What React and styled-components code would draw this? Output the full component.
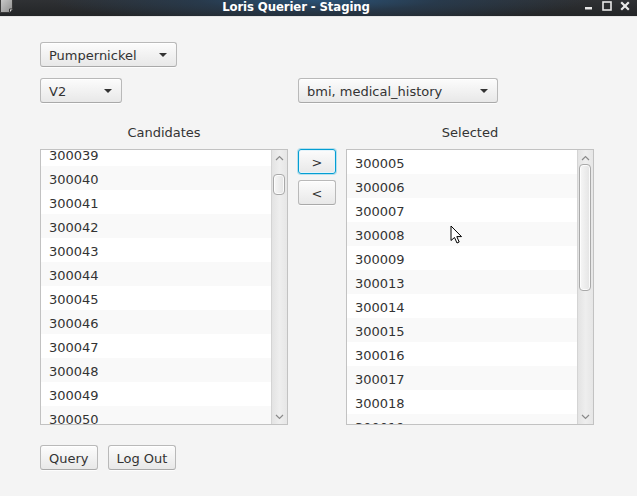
import React from 'react';
import styled, { createGlobalStyle } from 'styled-components';

const Global = createGlobalStyle`
  html, body { margin: 0; padding: 0; background: #f4f4f4; }
  body {
    font-family: "DejaVu Sans", "Liberation Sans", sans-serif;
    font-size: 13px;
    color: #333333;
  }
  #root { width: 637px; height: 496px; overflow: hidden; position: relative; }
`;

const Window = styled.div`
  width: 637px;
  height: 496px;
  display: flex;
  flex-direction: column;
  background: #f4f4f4;
  position: relative;
`;

const TitleBar = styled.div`
  height: 17px;
  flex: none;
  display: flex;
  align-items: flex-start;
  background:
    radial-gradient(ellipse 42% 150% at 50% 0%, rgba(42, 84, 122, 0.95) 0%, rgba(38, 62, 86, 0.7) 45%, rgba(40, 44, 48, 0) 100%),
    linear-gradient(#2f3134, #232527);
  border-bottom: 1px solid #e6e6e6;
  box-sizing: border-box;
`;

const AppIcon = styled.svg`
  flex: none;
  width: 14px;
  height: 14px;
`;

const Title = styled.div`
  flex: 1;
  text-align: center;
  color: #ffffff;
  font-family: "DejaVu Sans Condensed", "DejaVu Sans", sans-serif;
  font-stretch: condensed;
  font-weight: bold;
  font-size: 13px;
  line-height: 13px;
  letter-spacing: -0.1px;
  white-space: nowrap;
`;

const WinButtons = styled.div`
  flex: none;
  width: 59px;
  display: flex;
  align-items: flex-start;
  justify-content: flex-end;
  gap: 8px;
  padding-right: 7px;
  padding-top: 1px;
  box-sizing: border-box;
`;

const WinIcon = styled.svg`
  width: 10px;
  height: 10px;
  flex: none;
`;

const Content = styled.div`
  flex: 1;
  padding: 25px 0 0 40px;
  display: flex;
  flex-direction: column;
`;

const Combo = styled.div`
  box-sizing: border-box;
  width: ${p => p.$w}px;
  height: 25px;
  display: flex;
  align-items: center;
  border: 1px solid #b9b9b9;
  border-bottom-color: #a9a9a9;
  border-radius: 3px;
  background: linear-gradient(#fcfcfc, #e8e8e8);
  box-shadow: inset 0 1px 0 #ffffff, 0 1px 0 rgba(255, 255, 255, 0.8);
  margin-left: ${p => p.$ml || 0}px;
`;

const ComboText = styled.span`
  flex: 1;
  padding: 2px 0 0 8px;
  white-space: nowrap;
  overflow: hidden;
  line-height: 16px;
`;

const ComboArrow = styled.span`
  flex: none;
  width: 26px;
  display: flex;
  justify-content: center;
  align-items: center;
  &::after {
    content: "";
    display: block;
    width: 0;
    height: 0;
    border-left: 4px solid transparent;
    border-right: 4px solid transparent;
    border-top: 4px solid #333333;
  }
`;

const Row = styled.div`
  display: flex;
  align-items: center;
  margin-top: ${p => p.$mt || 0}px;
`;

const Main = styled.div`
  display: grid;
  grid-template-columns: 248px 58px 248px;
  grid-template-rows: 18px 276px;
  row-gap: 8px;
  margin-top: 20px;
`;

const ColLabel = styled.div`
  text-align: center;
  line-height: 16px;
  padding-top: 2px;
  grid-column: ${p => p.$col};
`;

const ListBox = styled.div`
  box-sizing: border-box;
  border: 1px solid #c2c2c2;
  background: #ffffff;
  display: flex;
  overflow: hidden;
  grid-column: ${p => p.$col};
`;

const ListBody = styled.div`
  flex: 1;
  overflow: hidden;
`;

const Rows = styled.div`
  margin-top: ${p => p.$offset}px;
`;

const Cell = styled.div`
  box-sizing: border-box;
  height: 24px;
  padding: 3px 0 0 8px;
  line-height: 21px;
  background: ${p => (p.$alt ? '#f9f9f9' : '#ffffff')};
  white-space: nowrap;
`;

const ScrollBar = styled.div`
  flex: none;
  width: 16px;
  display: flex;
  flex-direction: column;
  box-sizing: border-box;
  border-left: 1px solid #d4d4d4;
  background: linear-gradient(to right, #e3e3e3, #eeeeee 50%, #e6e6e6);
`;

const ScrollArrow = styled.div`
  flex: none;
  height: 15px;
  display: flex;
  align-items: center;
  justify-content: center;
`;

const Track = styled.div`
  flex: 1;
  padding: 0 2px 0 1px;
`;

const Thumb = styled.div`
  box-sizing: border-box;
  border: 1px solid #a9a9a9;
  border-radius: 4px;
  background: linear-gradient(to right, #f6f6f6, #e4e4e4);
  box-shadow: inset 0 0 0 1px rgba(255, 255, 255, 0.8);
`;

const MoveButtons = styled.div`
  grid-column: 2;
  display: flex;
  flex-direction: column;
  align-items: center;
  gap: 6px;
`;

const Button = styled.button`
  box-sizing: border-box;
  height: 25px;
  width: ${p => (p.$w ? `${p.$w}px` : 'auto')};
  padding: 2px 8px 0;
  margin: 0;
  font-family: "DejaVu Sans", sans-serif;
  font-size: 13px;
  color: #333333;
  line-height: 16px;
  border-radius: 3px;
  border: 1px solid ${p => (p.$focused ? '#039ed3' : '#b9b9b9')};
  border-bottom-color: ${p => (p.$focused ? '#039ed3' : '#a9a9a9')};
  background: linear-gradient(#fcfcfc, #e8e8e8);
  box-shadow: ${p =>
    p.$focused
      ? 'inset 0 0 0 1px #e4f4fb, 0 0 0 1px rgba(3,158,211,0.25)'
      : 'inset 0 1px 0 #ffffff, 0 1px 0 rgba(255,255,255,0.8)'};
`;

const Footer = styled.div`
  display: flex;
  gap: 10px;
  margin-top: 20px;
`;

const Cursor = styled.svg`
  position: absolute;
  left: 450px;
  top: 225px;
  width: 14px;
  height: 20px;
  pointer-events: none;
`;

const Chevron = ({ down }) => (
  <svg width="9" height="6" viewBox="0 0 9 6">
    <path
      d={down ? 'M1 1 L4.5 4.5 L8 1' : 'M1 5 L4.5 1.5 L8 5'}
      fill="none"
      stroke="#8a8a8a"
      strokeWidth="1.2"
    />
  </svg>
);

const VScroll = ({ thumbTop, thumbHeight }) => (
  <ScrollBar>
    <ScrollArrow><Chevron /></ScrollArrow>
    <Track>
      <Thumb style={{ marginTop: thumbTop, height: thumbHeight }} />
    </Track>
    <ScrollArrow><Chevron down /></ScrollArrow>
  </ScrollBar>
);

const ItemList = ({ col, items, offset, thumbTop, thumbHeight }) => (
  <ListBox $col={col}>
    <ListBody>
      <Rows $offset={offset}>
        {items.map((it, i) => (
          <Cell key={it} $alt={i % 2 === 1}>{it}</Cell>
        ))}
      </Rows>
    </ListBody>
    <VScroll thumbTop={thumbTop} thumbHeight={thumbHeight} />
  </ListBox>
);

const candidates = [];
for (let n = 39; n <= 51; n++) candidates.push(`3000${n}`);
const selected = [
  '300005', '300006', '300007', '300008', '300009', '300013', '300014',
  '300015', '300016', '300017', '300018', '300019',
];

export default function App() {
  return (
    <>
      <Global />
      <Window>
        <TitleBar>
          <AppIcon viewBox="0 0 14 14">
            <defs>
              <linearGradient id="pg" x1="0" y1="0" x2="1" y2="1">
                <stop offset="0" stopColor="#c9c9c9" />
                <stop offset="1" stopColor="#8e8e8e" />
              </linearGradient>
            </defs>
            <path d="M0.5 -0.5 H12.5 V9 L9.5 12.5 H0.5 Z" fill="url(#pg)" stroke="#3a3a3a" strokeWidth="1" />
            <path d="M9.5 12.5 V9 H12.5" fill="#e0e0e0" stroke="#3a3a3a" strokeWidth="1" />
          </AppIcon>
          <Title>Loris Querier - Staging</Title>
          <WinButtons>
            <WinIcon viewBox="0 0 10 10">
              <rect x="1" y="6" width="7" height="2.5" fill="#e8e8e8" />
            </WinIcon>
            <WinIcon viewBox="0 0 10 10">
              <rect x="1" y="1" width="8" height="8" fill="none" stroke="#e8e8e8" strokeWidth="1.6" />
            </WinIcon>
            <WinIcon viewBox="0 0 10 10">
              <path d="M1.2 1.2 L8.8 8.8 M8.8 1.2 L1.2 8.8" stroke="#e8e8e8" strokeWidth="2.2" />
            </WinIcon>
          </WinButtons>
        </TitleBar>

        <Content>
          <Row>
            <Combo $w={137}>
              <ComboText>Pumpernickel</ComboText>
              <ComboArrow />
            </Combo>
          </Row>
          <Row $mt={11}>
            <Combo $w={82}>
              <ComboText>V2</ComboText>
              <ComboArrow />
            </Combo>
            <Combo $w={200} $ml={176}>
              <ComboText>bmi, medical_history</ComboText>
              <ComboArrow />
            </Combo>
          </Row>

          <Main>
            <ColLabel $col={1}>Candidates</ColLabel>
            <ColLabel $col={3}>Selected</ColLabel>
            <ItemList col={1} items={candidates} offset={-8} thumbTop={9} thumbHeight={21} />
            <MoveButtons>
              <Button $w={38} $focused>&gt;</Button>
              <Button $w={38}>&lt;</Button>
            </MoveButtons>
            <ItemList col={3} items={selected} offset={0} thumbTop={-1} thumbHeight={127} />
          </Main>

          <Footer>
            <Button>Query</Button>
            <Button>Log Out</Button>
          </Footer>
        </Content>

        <Cursor viewBox="0 0 14 20">
          <path
            d="M1 1 L1 15.5 L4.5 12.5 L7 18 L9.2 17 L6.8 11.6 L11.5 11.6 Z"
            fill="#ffffff"
            stroke="#000000"
            strokeWidth="1"
            strokeLinejoin="round"
          />
        </Cursor>
      </Window>
    </>
  );
}
